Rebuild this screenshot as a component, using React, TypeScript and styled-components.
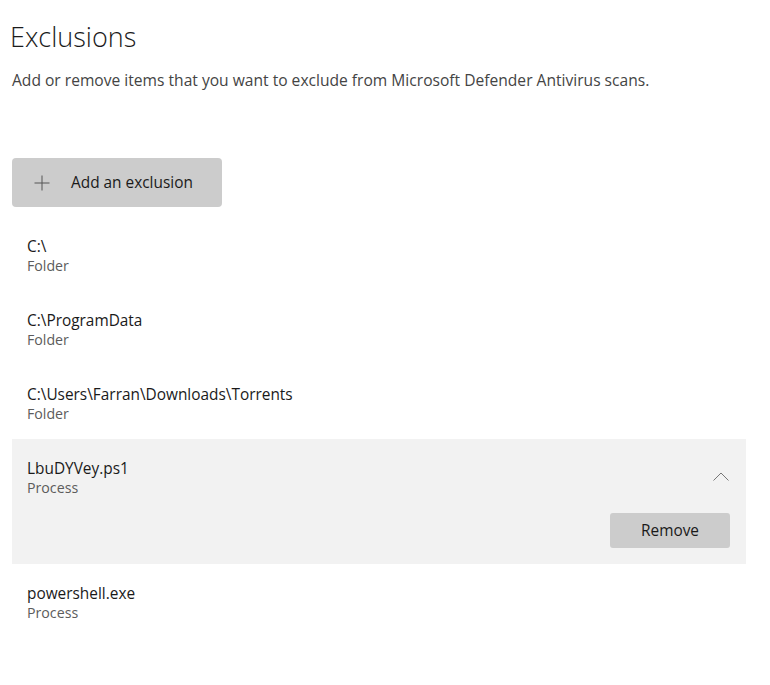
import { useState } from "react";
import styled, { createGlobalStyle } from "styled-components";

type Exclusion = {
  id: number;
  path: string;
  kind: string;
};

const exclusions: Exclusion[] = [
  { id: 1, path: "C:\\", kind: "Folder" },
  { id: 2, path: "C:\\ProgramData", kind: "Folder" },
  { id: 3, path: "C:\\Users\\Farran\\Downloads\\Torrents", kind: "Folder" },
  { id: 4, path: "LbuDYVey.ps1", kind: "Process" },
  { id: 5, path: "powershell.exe", kind: "Process" },
];

const App = () => {
  const [openId, setOpenId] = useState<number | null>(4);

  return (
    <>
      <GlobalStyle />
      <Page>
        <Title>Exclusions</Title>
        <Description>
          Add or remove items that you want to exclude from Microsoft Defender
          Antivirus scans.
        </Description>

        <AddButton>
          <PlusIcon viewBox="0 0 16 16">
            <path d="M8 0.5v15M0.5 8h15" />
          </PlusIcon>
          Add an exclusion
        </AddButton>

        <List>
          {exclusions.map((item) => {
            const open = item.id === openId;
            return (
              <Item key={item.id} $open={open}>
                <ItemHeader onClick={() => setOpenId(open ? null : item.id)}>
                  <div>
                    <ItemPath>{item.path}</ItemPath>
                    <ItemKind>{item.kind}</ItemKind>
                  </div>
                  {open && (
                    <Chevron viewBox="0 0 16 9">
                      <path d="M0.5 8.5L8 1l7.5 7.5" />
                    </Chevron>
                  )}
                </ItemHeader>
                {open && (
                  <ItemActions>
                    <RemoveButton>Remove</RemoveButton>
                  </ItemActions>
                )}
              </Item>
            );
          })}
        </List>
      </Page>
    </>
  );
};

export default App;

const GlobalStyle = createGlobalStyle`
  body {
    margin: 0;
    background: #ffffff;
    font-family: "Open Sans", "Noto Sans", sans-serif;
    color: #1a1a1a;
  }
`;

const Page = styled.div`
  width: 734px;
  padding: 15px 0 0 12px;
`;

const Title = styled.h1`
  margin: 0 0 0 -2px;
  font-size: 27px;
  font-weight: 300;
  line-height: 44px;
  color: #1b1b1b;
`;

const Description = styled.p`
  margin: 11px 0 0;
  font-size: 15.6px;
  line-height: 20px;
  color: #444444;
`;

const AddButton = styled.button`
  display: flex;
  align-items: center;
  gap: 21px;
  width: 210px;
  height: 49px;
  margin-top: 68px;
  padding: 0 0 0 22px;
  border: none;
  border-radius: 4px;
  background: #cccccc;
  font-family: inherit;
  font-size: 15.4px;
  color: #1a1a1a;
  cursor: pointer;
`;

const PlusIcon = styled.svg`
  width: 16px;
  height: 16px;
  fill: none;
  stroke: #555555;
  stroke-width: 1;
`;

const List = styled.div`
  display: flex;
  flex-direction: column;
  margin-top: 10px;
`;

const Item = styled.div<{ $open: boolean }>`
  background: ${(p) => (p.$open ? "#f2f2f2" : "transparent")};
`;

const ItemHeader = styled.div`
  display: flex;
  justify-content: space-between;
  align-items: center;
  height: 74px;
  padding: 3px 16px 0 15px;
  box-sizing: border-box;
  cursor: pointer;
`;

const ItemPath = styled.div`
  font-size: 15.4px;
  line-height: 20px;
  color: #1a1a1a;
`;

const ItemKind = styled.div`
  font-size: 14.2px;
  line-height: 18px;
  color: #5c5c5c;
`;

const Chevron = styled.svg`
  width: 16px;
  height: 9px;
  margin: 0 1px 2px 0;
  fill: none;
  stroke: #777777;
  stroke-width: 1;
`;

const ItemActions = styled.div`
  display: flex;
  justify-content: flex-end;
  padding: 0 16px 16px;
`;

const RemoveButton = styled.button`
  width: 120px;
  height: 35px;
  border: none;
  border-radius: 3px;
  background: #cccccc;
  font-family: inherit;
  font-size: 15.4px;
  color: #1a1a1a;
  cursor: pointer;
`;
